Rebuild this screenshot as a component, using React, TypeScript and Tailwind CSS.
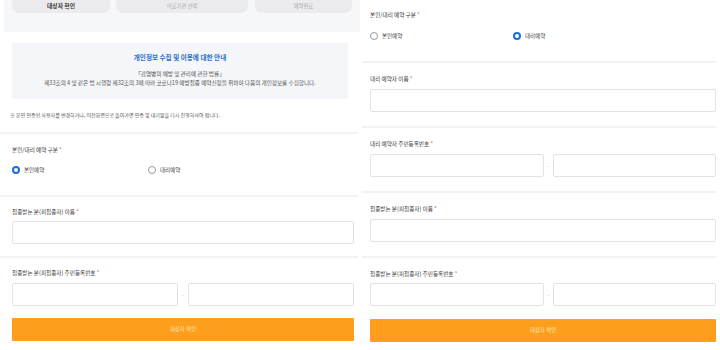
import React from "react";

const FONT = { fontFamily: '"Noto Sans CJK KR", "Noto Sans", sans-serif' };

function Radio({ checked, label }: { checked: boolean; label: string }) {
  return (
    <div className="flex items-center h-[10px]">
      {checked ? (
        <div className="w-[8px] h-[8px] rounded-full border-[2.5px] border-[#1b6fe0] bg-white" />
      ) : (
        <div className="w-[8px] h-[8px] rounded-full border border-[#9a9a9a] bg-white" />
      )}
      <span className="ml-[4px] text-[5.5px] leading-[8px] text-[#444]">{label}</span>
    </div>
  );
}

function Label({ text, className = "" }: { text: string; className?: string }) {
  return (
    <div className={"h-[8px] leading-[8px] text-[5.6px] text-[#3a3a3a] " + className}>
      {text} <span className="text-[#e5484d]">*</span>
    </div>
  );
}

function Input({ className = "" }: { className?: string }) {
  return <div className={"h-[23px] border border-[#e2e2e2] rounded-[2px] bg-white " + className} />;
}

function Divider({ className = "" }: { className?: string }) {
  return <div className={"h-[2px] bg-[#f3f3f3] " + className} />;
}

function Button({ className = "" }: { className?: string }) {
  return (
    <div
      className={
        "h-[23px] bg-[#fd9f1c] rounded-[1px] flex items-center justify-center text-[5.5px] text-[#fde3bd] " +
        className
      }
    >
      대상자 확인
    </div>
  );
}

function LeftPanel() {
  return (
    <div className="w-[360px] shrink-0 flex flex-col">
      <div className="h-[32px] ml-[4px] bg-[#f6f7f9] flex pl-[8px]">
        <div className="w-[98px] h-[13px] rounded-b-[7px] bg-[#ebebed] flex items-center justify-center text-[5.8px] font-bold text-[#333]">
          대상자 확인
        </div>
        <div className="ml-[6px] w-[132px] h-[13px] rounded-b-[7px] bg-[#ebebed] flex items-center justify-center text-[5.3px] text-[#aaa]">
          의료기관 선택
        </div>
        <div className="ml-[7px] w-[97px] h-[13px] rounded-b-[7px] bg-[#ebebed] flex items-center justify-center text-[5.3px] text-[#aaa]">
          예약완료
        </div>
      </div>

      <div className="mt-[11px] mx-[12px] h-[56px] bg-[#f4f6f9] flex flex-col items-center">
        <div className="mt-[10px] h-[8px] leading-[8px] text-[6.6px] font-bold text-[#2a6fc9]">
          개인정보 수집 및 이용에 대한 안내
        </div>
        <div className="mt-[10px] h-[6px] leading-[6px] text-[5.6px] text-[#555]">
          「감염병의 예방 및 관리에 관한 법률」
        </div>
        <div className="mt-[3px] h-[6px] leading-[6px] text-[5.6px] text-[#555]">
          제33조의 4 및 같은 법 시행령 제32조의 3에 따라 코로나19 예방접종 예약신청을 위하여 다음의 개인정보를 수집합니다.
        </div>
      </div>

      <div className="mt-[13px] ml-[10px] h-[6px] leading-[6px] text-[5px] text-[#555]">
        ※ 본인 인증된 사용자를 변경하거나, 이전화면으로 돌아가면 인증 및 대기열을 다시 진행하셔야 합니다.
      </div>

      <Divider className="mt-[14px] mr-[2px]" />

      <div className="px-[12px] flex flex-col">
        <Label text="본인/대리 예약 구분" className="mt-[12px]" />
        <div className="mt-[11px] flex">
          <div className="w-[136px]">
            <Radio checked label="본인예약" />
          </div>
          <Radio checked={false} label="대리예약" />
        </div>
      </div>

      <Divider className="mt-[20px] mr-[2px]" />

      <div className="px-[12px] pr-[6px] flex flex-col">
        <Label text="접종받는 분(피접종자) 이름" className="mt-[11px]" />
        <Input className="mt-[5px]" />
      </div>

      <Divider className="mt-[12px] mr-[2px]" />

      <div className="px-[12px] pr-[6px] flex flex-col">
        <Label text="접종받는 분(피접종자) 주민등록번호" className="mt-[11px]" />
        <div className="mt-[6px] flex items-center">
          <Input className="flex-1" />
          <div className="w-[10px] text-center text-[5px] text-[#999]">-</div>
          <Input className="flex-1" />
        </div>
        <Button className="mt-[12px]" />
      </div>
    </div>
  );
}

function RightPanel() {
  return (
    <div className="w-[360px] shrink-0 flex flex-col">
      <div className="pl-[10px] pr-[4px] flex flex-col">
        <Label text="본인/대리 예약 구분" className="mt-[11px]" />
        <div className="mt-[12px] flex">
          <div className="w-[143px]">
            <Radio checked={false} label="본인예약" />
          </div>
          <Radio checked label="대리예약" />
        </div>
      </div>

      <Divider className="mt-[20px] ml-[2px] mr-[4px]" />

      <div className="pl-[10px] pr-[4px] flex flex-col">
        <Label text="대리 예약자 이름" className="mt-[12px]" />
        <Input className="mt-[6px]" />
      </div>

      <Divider className="mt-[14px] ml-[2px] mr-[4px]" />

      <div className="pl-[10px] pr-[4px] flex flex-col">
        <Label text="대리 예약자 주민등록번호" className="mt-[12px]" />
        <div className="mt-[6px] flex items-center">
          <Input className="w-[174px]" />
          <div className="w-[9px] text-center text-[5px] text-[#999]">-</div>
          <Input className="flex-1" />
        </div>
      </div>

      <Divider className="mt-[14px] ml-[2px] mr-[4px]" />

      <div className="pl-[10px] pr-[4px] flex flex-col">
        <Label text="접종받는 분(피접종자) 이름" className="mt-[12px]" />
        <Input className="mt-[6px]" />
      </div>

      <Divider className="mt-[14px] ml-[2px] mr-[4px]" />

      <div className="pl-[10px] pr-[4px] flex flex-col">
        <Label text="접종받는 분(피접종자) 주민등록번호" className="mt-[12px]" />
        <div className="mt-[5px] flex items-center">
          <Input className="w-[174px]" />
          <div className="w-[9px] text-center text-[5px] text-[#999]">-</div>
          <Input className="flex-1" />
        </div>
        <Button className="mt-[13px]" />
      </div>
    </div>
  );
}

export default function App() {
  return (
    <div className="w-[720px] h-[350px] bg-white flex overflow-hidden" style={FONT}>
      <LeftPanel />
      <RightPanel />
    </div>
  );
}
